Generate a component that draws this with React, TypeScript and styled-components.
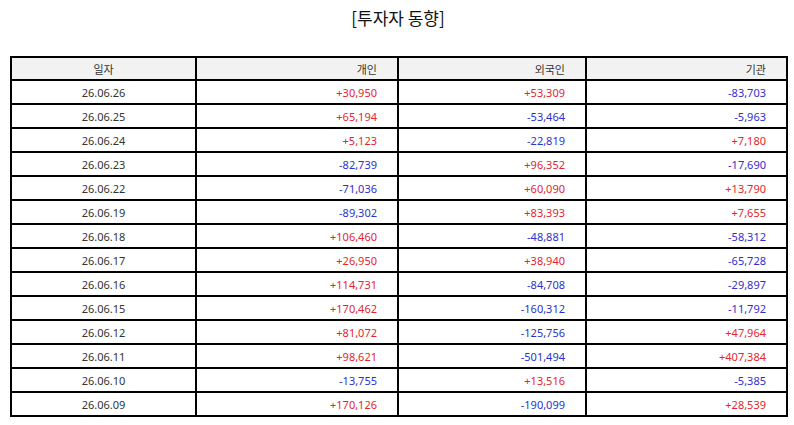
import React from "react";
import styled, { createGlobalStyle } from "styled-components";

const GlobalStyle = createGlobalStyle`
  html, body { margin: 0; padding: 0; background: #fff; }
  body { font-family: "Noto Sans", "Noto Sans CJK KR", sans-serif; }
`;

const Page = styled.div`
  width: 794px;
  padding: 5px 8px 0 10px;
  box-sizing: border-box;
  display: flex;
  flex-direction: column;
  align-items: stretch;
`;

const Title = styled.h1`
  margin: 0;
  height: 26px;
  line-height: 26px;
  font-size: 17px;
  font-weight: 400;
  color: #111;
  text-align: center;
  font-family: "Noto Sans CJK KR", "Noto Sans", sans-serif;
`;

const Spacer = styled.div`
  height: 25px;
`;

const Table = styled.table`
  border-collapse: collapse;
  width: 776px;
  table-layout: fixed;
  font-size: 11px;
  color: #333;
`;

const Cell = styled.td<{ $align?: "center" | "right"; $tone?: "up" | "down" }>`
  border: 2px solid #000;
  height: 22px;
  padding: 0 ${(p) => (p.$align === "right" ? "20px" : "0")} 0 0;
  text-align: ${(p) => p.$align ?? "center"};
  color: ${(p) => (p.$tone === "up" ? "#e3262e" : p.$tone === "down" ? "#2f2fcf" : "#333")};
  white-space: nowrap;
`;

const HeadCell = styled(Cell).attrs({ as: "th" })`
  background: #f2f2f2;
  font-weight: 400;
  height: 21px;
`;

const rows: [string, string, string, string][] = [
  ["26.06.26", "+30,950", "+53,309", "-83,703"],
  ["26.06.25", "+65,194", "-53,464", "-5,963"],
  ["26.06.24", "+5,123", "-22,819", "+7,180"],
  ["26.06.23", "-82,739", "+96,352", "-17,690"],
  ["26.06.22", "-71,036", "+60,090", "+13,790"],
  ["26.06.19", "-89,302", "+83,393", "+7,655"],
  ["26.06.18", "+106,460", "-48,881", "-58,312"],
  ["26.06.17", "+26,950", "+38,940", "-65,728"],
  ["26.06.16", "+114,731", "-84,708", "-29,897"],
  ["26.06.15", "+170,462", "-160,312", "-11,792"],
  ["26.06.12", "+81,072", "-125,756", "+47,964"],
  ["26.06.11", "+98,621", "-501,494", "+407,384"],
  ["26.06.10", "-13,755", "+13,516", "-5,385"],
  ["26.06.09", "+170,126", "-190,099", "+28,539"],
];

const tone = (v: string) => (v.startsWith("-") ? "down" : "up");

export default function App() {
  return (
    <>
      <GlobalStyle />
      <Page>
        <Title>[투자자 동향]</Title>
        <Spacer />
        <Table>
          <colgroup>
            <col style={{ width: 185 }} />
            <col style={{ width: 202 }} />
            <col style={{ width: 188 }} />
            <col style={{ width: 201 }} />
          </colgroup>
          <thead>
            <tr>
              <HeadCell>일자</HeadCell>
              <HeadCell $align="right">개인</HeadCell>
              <HeadCell $align="right">외국인</HeadCell>
              <HeadCell $align="right">기관</HeadCell>
            </tr>
          </thead>
          <tbody>
            {rows.map(([d, a, b, c]) => (
              <tr key={d}>
                <Cell>{d}</Cell>
                <Cell $align="right" $tone={tone(a)}>{a}</Cell>
                <Cell $align="right" $tone={tone(b)}>{b}</Cell>
                <Cell $align="right" $tone={tone(c)}>{c}</Cell>
              </tr>
            ))}
          </tbody>
        </Table>
      </Page>
    </>
  );
}
